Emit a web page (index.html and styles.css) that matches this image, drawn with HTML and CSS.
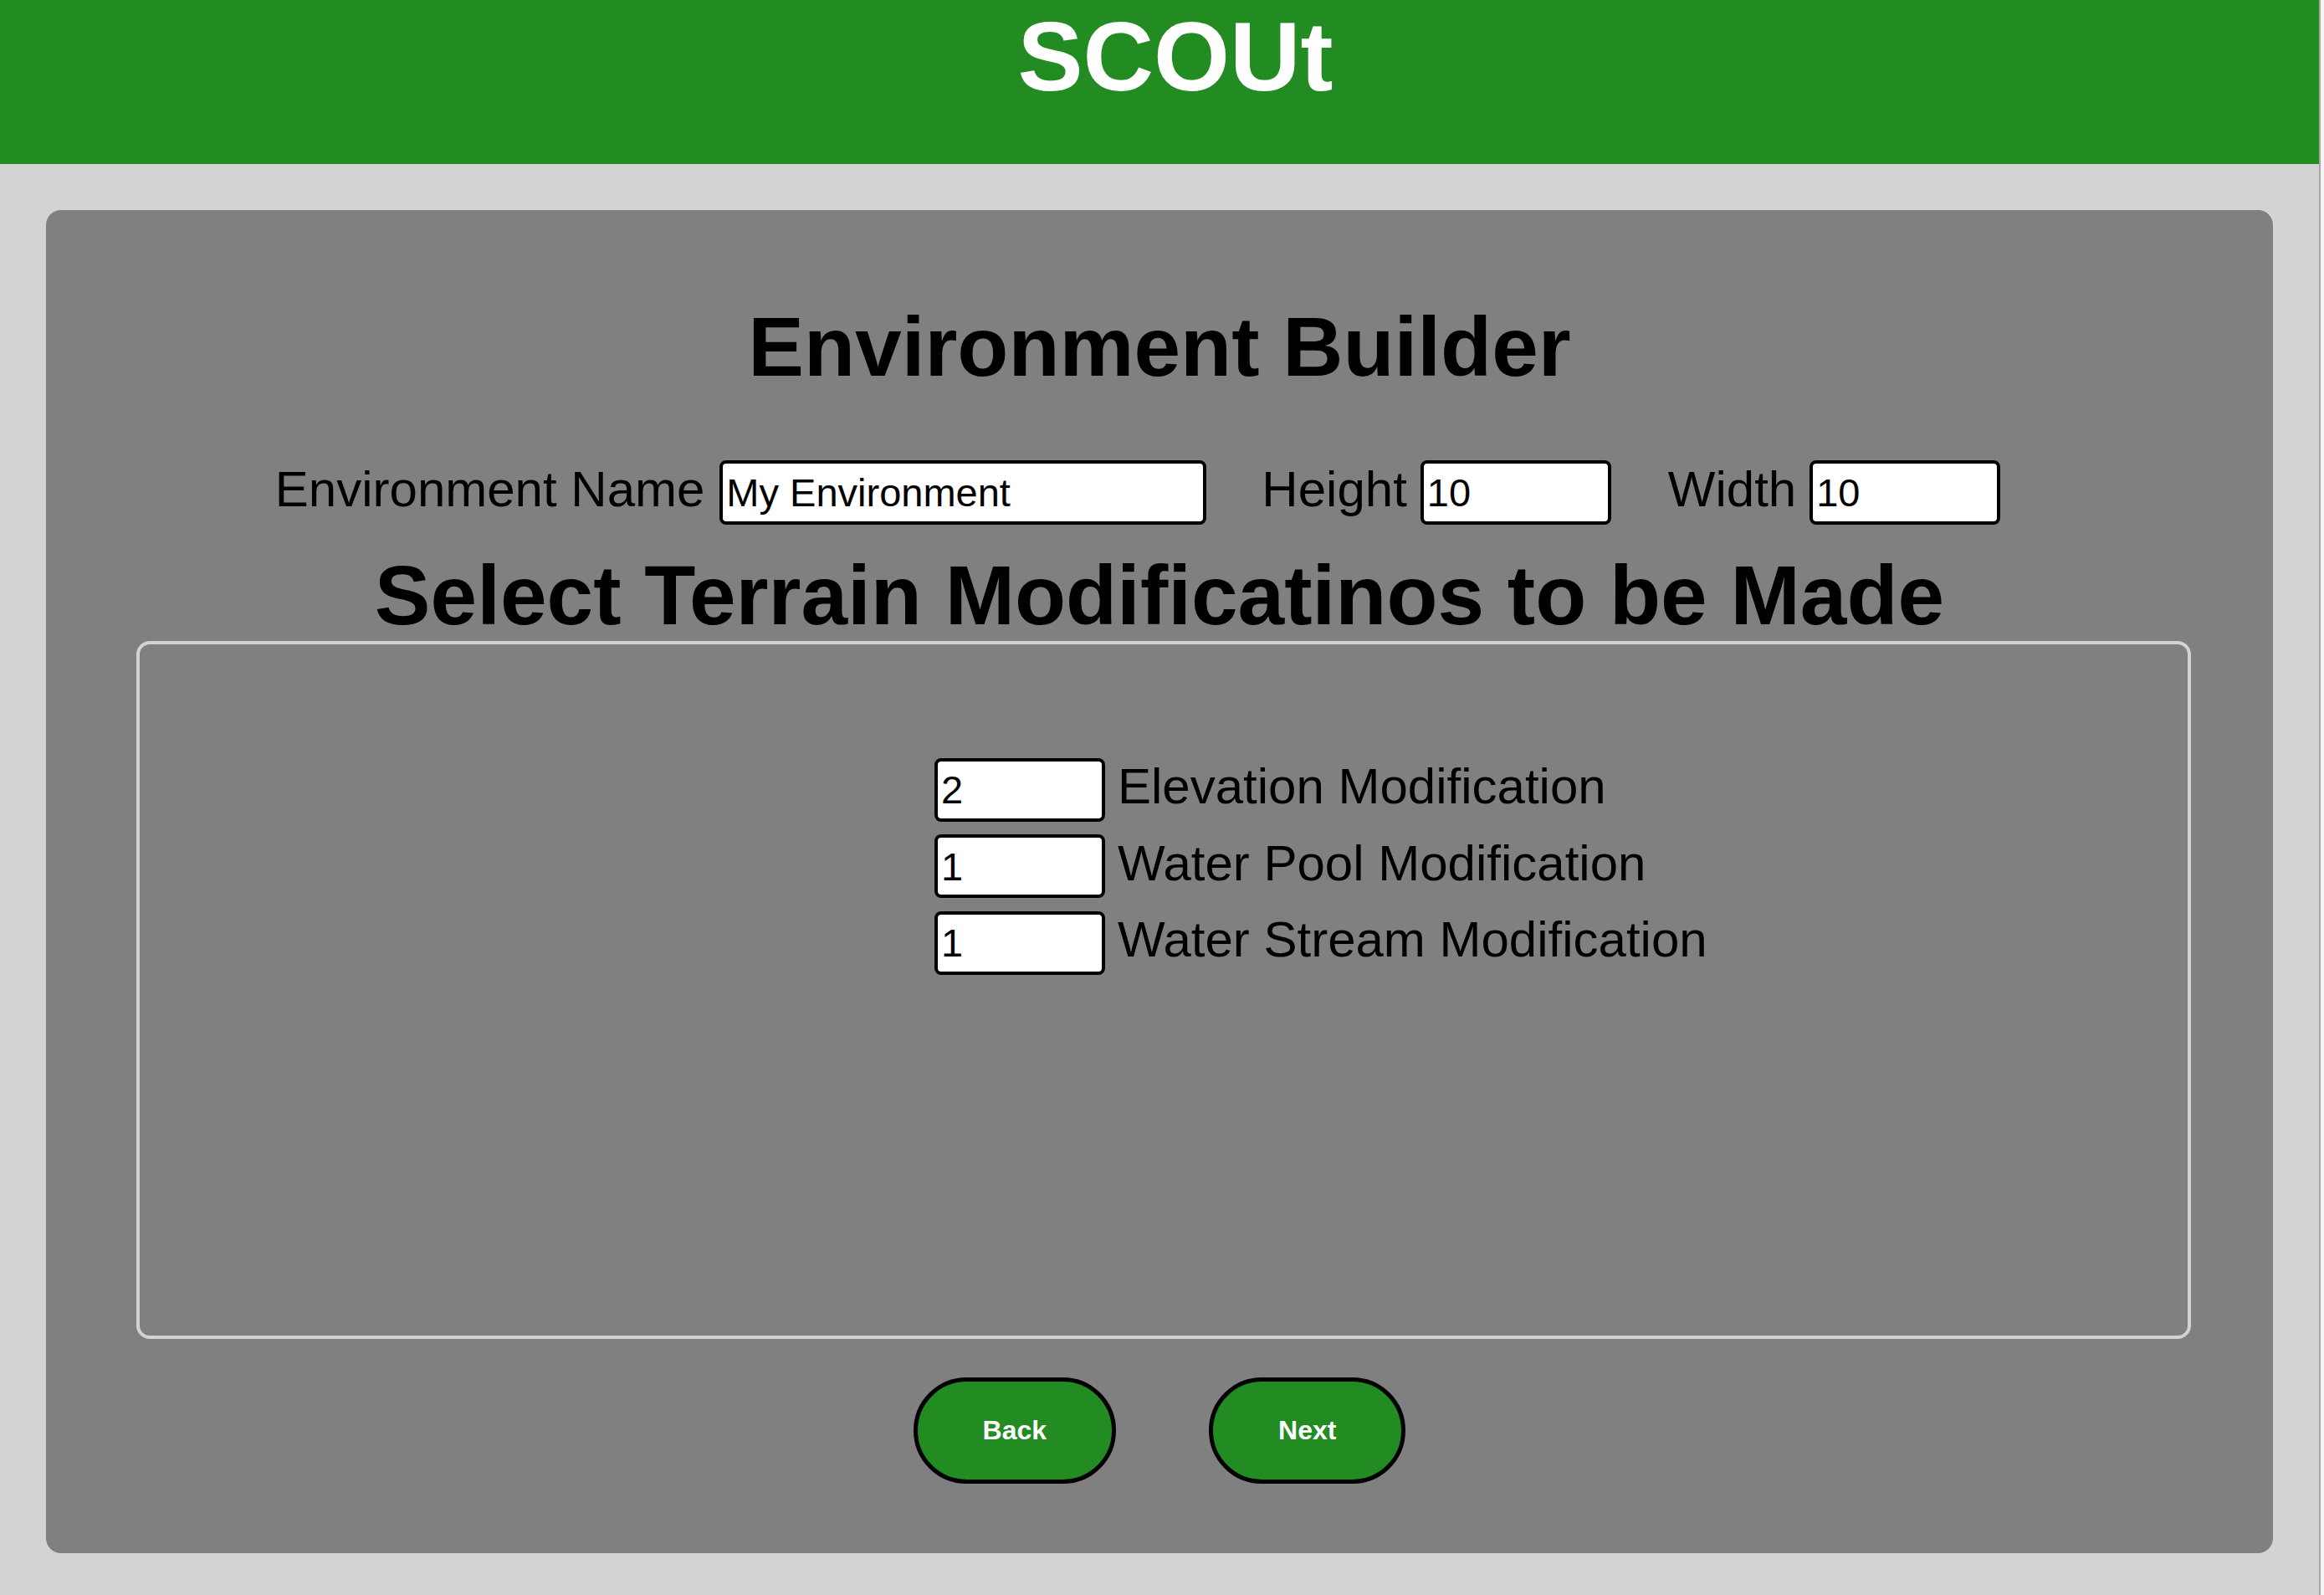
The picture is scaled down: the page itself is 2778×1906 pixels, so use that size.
FILE: index.html
```html
<!DOCTYPE html>
<html lang="en">
<head>
<meta charset="utf-8">
<title>SCOUt - Environment Builder</title>
<link rel="stylesheet" href="styles.css">
</head>
<body>
<div class="page">
  <header class="topbar">
    <h1 class="brand">SCOUt</h1>
  </header>
  <main class="panel">
    <h1 class="title">Environment Builder</h1>
    <div class="settings">
      <label class="field-label" for="envName">Environment Name</label>
      <input class="text-input name-input" id="envName" type="text" value="My Environment">
      <label class="field-label short-label" for="envHeight">Height</label>
      <input class="text-input size-input" id="envHeight" type="text" value="10">
      <label class="field-label short-label" for="envWidth">Width</label>
      <input class="text-input size-input last-input" id="envWidth" type="text" value="10">
    </div>
    <h2 class="subtitle">Select Terrain Modificatinos to be Made</h2>
    <section class="mods-box">
      <div class="mods">
        <div class="mod-row">
          <input class="text-input mod-input" id="modElev" type="text" value="2">
          <label class="mod-label" for="modElev">Elevation Modification</label>
        </div>
        <div class="mod-row">
          <input class="text-input mod-input" id="modPool" type="text" value="1">
          <label class="mod-label" for="modPool">Water Pool Modification</label>
        </div>
        <div class="mod-row">
          <input class="text-input mod-input" id="modStream" type="text" value="1">
          <label class="mod-label" for="modStream">Water Stream Modification</label>
        </div>
      </div>
    </section>
    <div class="actions">
      <button class="btn" type="button">Back</button>
      <button class="btn" type="button">Next</button>
    </div>
  </main>
</div>
<div class="scrollbar"></div>
</body>
</html>
```
FILE: styles.css
```css
html, body {
  margin: 0;
  padding: 0;
  height: 100%;
  overflow: hidden;
}

body {
  display: flex;
  background: #d3d3d3;
  font-family: "Liberation Sans", Arial, sans-serif;
  color: #000;
}

.page {
  flex: 1;
  min-width: 0;
}

.scrollbar {
  width: 4px;
  flex: none;
  border-left: 2px solid #a8a8a8;
  background: #f4f4f4;
}

.topbar {
  height: 196px;
  background: #228b22;
  padding-left: 38px;
  box-sizing: border-box;
}

.brand {
  margin: 0;
  font-size: 117px;
  line-height: 136px;
  font-weight: bold;
  color: #fff;
  text-align: center;
}

.panel {
  margin: 55px;
  background: #808080;
  border-radius: 18px;
  padding: 106px 0 83px;
}

.title {
  margin: 0;
  font-size: 100px;
  line-height: 115px;
  font-weight: bold;
  text-align: center;
}

.settings {
  display: flex;
  align-items: baseline;
  justify-content: center;
  margin-top: 78px;
  padding-right: 52px;
}

.field-label {
  font-size: 60px;
  line-height: 69px;
  margin-right: 18px;
  white-space: nowrap;
}

.field-label.short-label {
  margin-right: 16px;
}

.text-input {
  box-sizing: border-box;
  border: 4px solid #000;
  border-radius: 8px;
  background: #fff;
  color: #000;
  font-family: "Liberation Sans", Arial, sans-serif;
  font-size: 47px;
  padding: 0 4px;
  margin: 0;
  outline: none;
}

.name-input {
  width: 582px;
  height: 77px;
  margin-right: 66px;
}

.size-input {
  width: 228px;
  height: 77px;
  margin-right: 68px;
}

.size-input.last-input {
  margin-right: 0;
}

.subtitle {
  margin: 29px 0 0;
  font-size: 100px;
  line-height: 110px;
  font-weight: bold;
  text-align: center;
}

.mods-box {
  box-sizing: border-box;
  height: 834px;
  margin: 0 98px 0 108px;
  border: 4px solid #d3d3d3;
  border-radius: 16px;
  padding: 135px 0 0 950px;
}

.mods {
  display: flex;
  flex-direction: column;
  gap: 15px;
}

.mod-row {
  display: flex;
  align-items: baseline;
}

.mod-input {
  width: 204px;
  height: 76px;
  margin-right: 15px;
}

.mod-label {
  font-size: 60px;
  line-height: 69px;
  white-space: nowrap;
}

.actions {
  display: flex;
  justify-content: center;
  gap: 111px;
  margin-top: 46px;
}

.btn {
  box-sizing: border-box;
  height: 127px;
  padding: 0 78px;
  border: 5px solid #000;
  border-radius: 64px;
  background: #228b22;
  color: #fff;
  font-family: "Liberation Sans", Arial, sans-serif;
  font-size: 32px;
  font-weight: bold;
  cursor: pointer;
}
```
